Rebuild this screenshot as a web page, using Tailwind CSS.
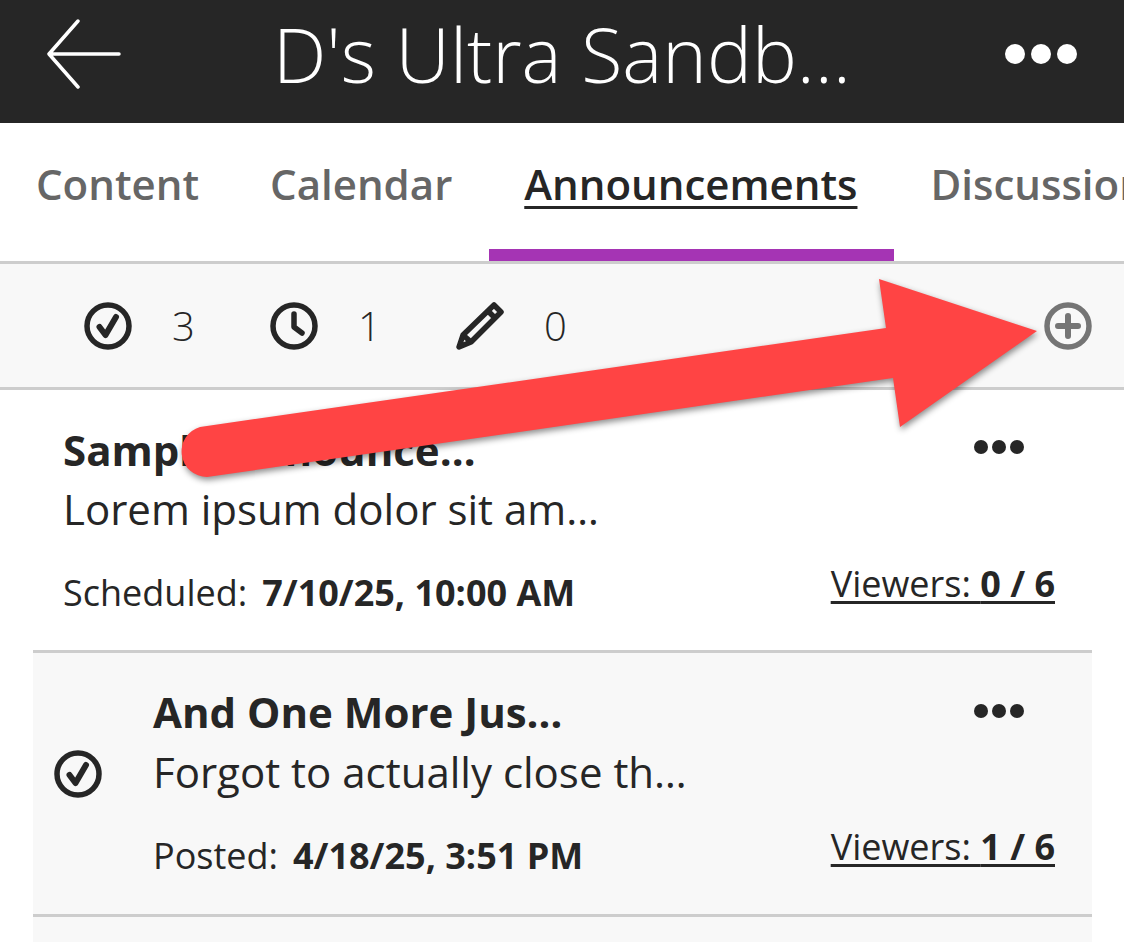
<!DOCTYPE html>
<html lang="en">
<head>
    <meta charset="UTF-8">
    <title>D's Ultra Sandbox</title>
    <script src="https://cdn.jsdelivr.net/npm/@tailwindcss/browser@4"></script>
</head>
<body class="relative w-[1124px] h-[942px] overflow-hidden bg-white font-['Open_Sans',sans-serif] text-[#262626]">

    <!-- Header -->
    <header class="h-[123px] pb-[15px] bg-[#262626] text-white flex items-center">
        <svg class="ml-[47px] w-[74px] h-[70px]" viewBox="0 0 74 70" fill="none" stroke="white" stroke-width="3.5" stroke-linecap="round" stroke-linejoin="round">
            <path d="M31 2 L2 35 L31 68 M2 35 H72"/>
        </svg>
        <h1 class="ml-[152px] text-[75.5px] font-light leading-none whitespace-nowrap">D's Ultra Sandb…</h1>
        <div class="ml-auto mr-[47px] flex gap-[6px]">
            <span class="w-5 h-5 rounded-full bg-white"></span>
            <span class="w-5 h-5 rounded-full bg-white"></span>
            <span class="w-5 h-5 rounded-full bg-white"></span>
        </div>
    </header>

    <!-- Tabs -->
    <nav class="h-[141px] border-b-[3px] border-[#cdcdcd] flex text-[42px] font-semibold text-[#666] whitespace-nowrap overflow-hidden">
        <a class="pl-9 pr-[35px] pt-[29px]">Content</a>
        <a class="pl-9 pr-[37px] pt-[29px]">Calendar</a>
        <a class="pl-[35px] pr-[37px] pt-[29px] h-[138px] border-b-[12px] border-[#a534b4] text-[#262626]"><span class="underline underline-offset-[6px] decoration-[3px]">Announcements</span></a>
        <a class="px-9 pt-[29px]">Discussions</a>
    </nav>

    <!-- Counts -->
    <div class="h-[126px] bg-[#f8f8f8] border-b-[3px] border-[#cdcdcd] flex items-center text-[40px] font-light">
        <svg class="ml-[84px] w-12 h-12" viewBox="0 0 48 48" fill="none" stroke="#262626" stroke-width="5.5" stroke-linecap="round" stroke-linejoin="round">
            <circle cx="24" cy="24" r="21"/><path d="M15.5 25 L21.5 33 L32 15" stroke-width="6"/>
        </svg>
        <span class="ml-10 w-[98px]">3</span>
        <svg class="w-12 h-12" viewBox="0 0 48 48" fill="none" stroke="#262626" stroke-width="5.5" stroke-linecap="round" stroke-linejoin="round">
            <circle cx="24" cy="24" r="21"/><path d="M24 12 V25 L32 31"/>
        </svg>
        <span class="ml-10 w-[98px]">1</span>
        <svg class="w-12 h-12" viewBox="0 0 48 48" fill="none" stroke="#262626" stroke-width="5.5" stroke-linejoin="round">
            <path d="M38 3 L45 10 L15 40 L3 45 L7 33 Z M32 9 L39 16 M7 33 L15 40"/>
        </svg>
        <span class="ml-10">0</span>
        <svg class="ml-auto mr-8 w-12 h-12" viewBox="0 0 48 48" fill="none" stroke="#757575" stroke-width="5.5" stroke-linecap="round">
            <circle cx="24" cy="24" r="21"/><path d="M24 14 V34 M14 24 H34" stroke-width="6"/>
        </svg>
    </div>

    <!-- Announcement scheduled -->
    <section class="h-[260px] ml-[33px] mr-[32px] relative pl-[30px] pt-[35px]">
        <h2 class="text-[42px] leading-[50px] font-bold">Sample Announce…</h2>
        <p class="mt-[7px] text-[42px] leading-[54px]">Lorem ipsum dolor sit am…</p>
        <p class="mt-[34px] text-[36px] leading-[46px] whitespace-nowrap">Scheduled:<b class="ml-[15px] font-bold">7/10/25, 10:00 AM</b></p>
        <div class="absolute right-[68px] top-[50px] flex gap-[4px]">
            <span class="w-[14px] h-[14px] rounded-full bg-[#262626]"></span>
            <span class="w-[14px] h-[14px] rounded-full bg-[#262626]"></span>
            <span class="w-[14px] h-[14px] rounded-full bg-[#262626]"></span>
        </div>
        <a class="absolute right-[37px] top-[171px] text-[36px] leading-[46px] underline underline-offset-4">Viewers: <b class="font-bold">0 / 6</b></a>
    </section>

    <!-- Announcement posted -->
    <section class="h-[267px] ml-[33px] mr-[32px] relative bg-[#f8f8f8] border-y-[3px] border-[#cdcdcd] pl-[120px] pt-[34px]">
        <svg class="absolute left-[21px] top-[97px] w-12 h-12" viewBox="0 0 48 48" fill="none" stroke="#262626" stroke-width="5.5" stroke-linecap="round" stroke-linejoin="round">
            <circle cx="24" cy="24" r="21"/><path d="M15.5 25 L21.5 33 L32 15" stroke-width="6"/>
        </svg>
        <h2 class="text-[42px] leading-[50px] font-bold">And One More Jus…</h2>
        <p class="mt-[8px] text-[42px] leading-[54px]">Forgot to actually close th…</p>
        <p class="mt-[34px] text-[36px] leading-[46px] whitespace-nowrap">Posted:<b class="ml-[15px] font-bold">4/18/25, 3:51 PM</b></p>
        <div class="absolute right-[68px] top-[51px] flex gap-[4px]">
            <span class="w-[14px] h-[14px] rounded-full bg-[#262626]"></span>
            <span class="w-[14px] h-[14px] rounded-full bg-[#262626]"></span>
            <span class="w-[14px] h-[14px] rounded-full bg-[#262626]"></span>
        </div>
        <a class="absolute right-[37px] top-[171px] text-[36px] leading-[46px] underline underline-offset-4">Viewers: <b class="font-bold">1 / 6</b></a>
    </section>
    <div class="h-[30px] ml-[33px] mr-[32px] bg-[#f8f8f8]"></div>

    <!-- Red arrow callout -->
    <svg class="absolute inset-0 w-[1124px] h-[942px] drop-shadow-[1px_3px_3px_rgba(0,0,0,0.45)]" viewBox="0 0 1124 942">
        <path fill="#ff4444" d="M200 427 L886 328 L879 279 L1037 331 L900 427 L893 378 L207 477 A25.5 25.5 0 0 1 200 427 Z"/>
    </svg>
</body>
</html>
